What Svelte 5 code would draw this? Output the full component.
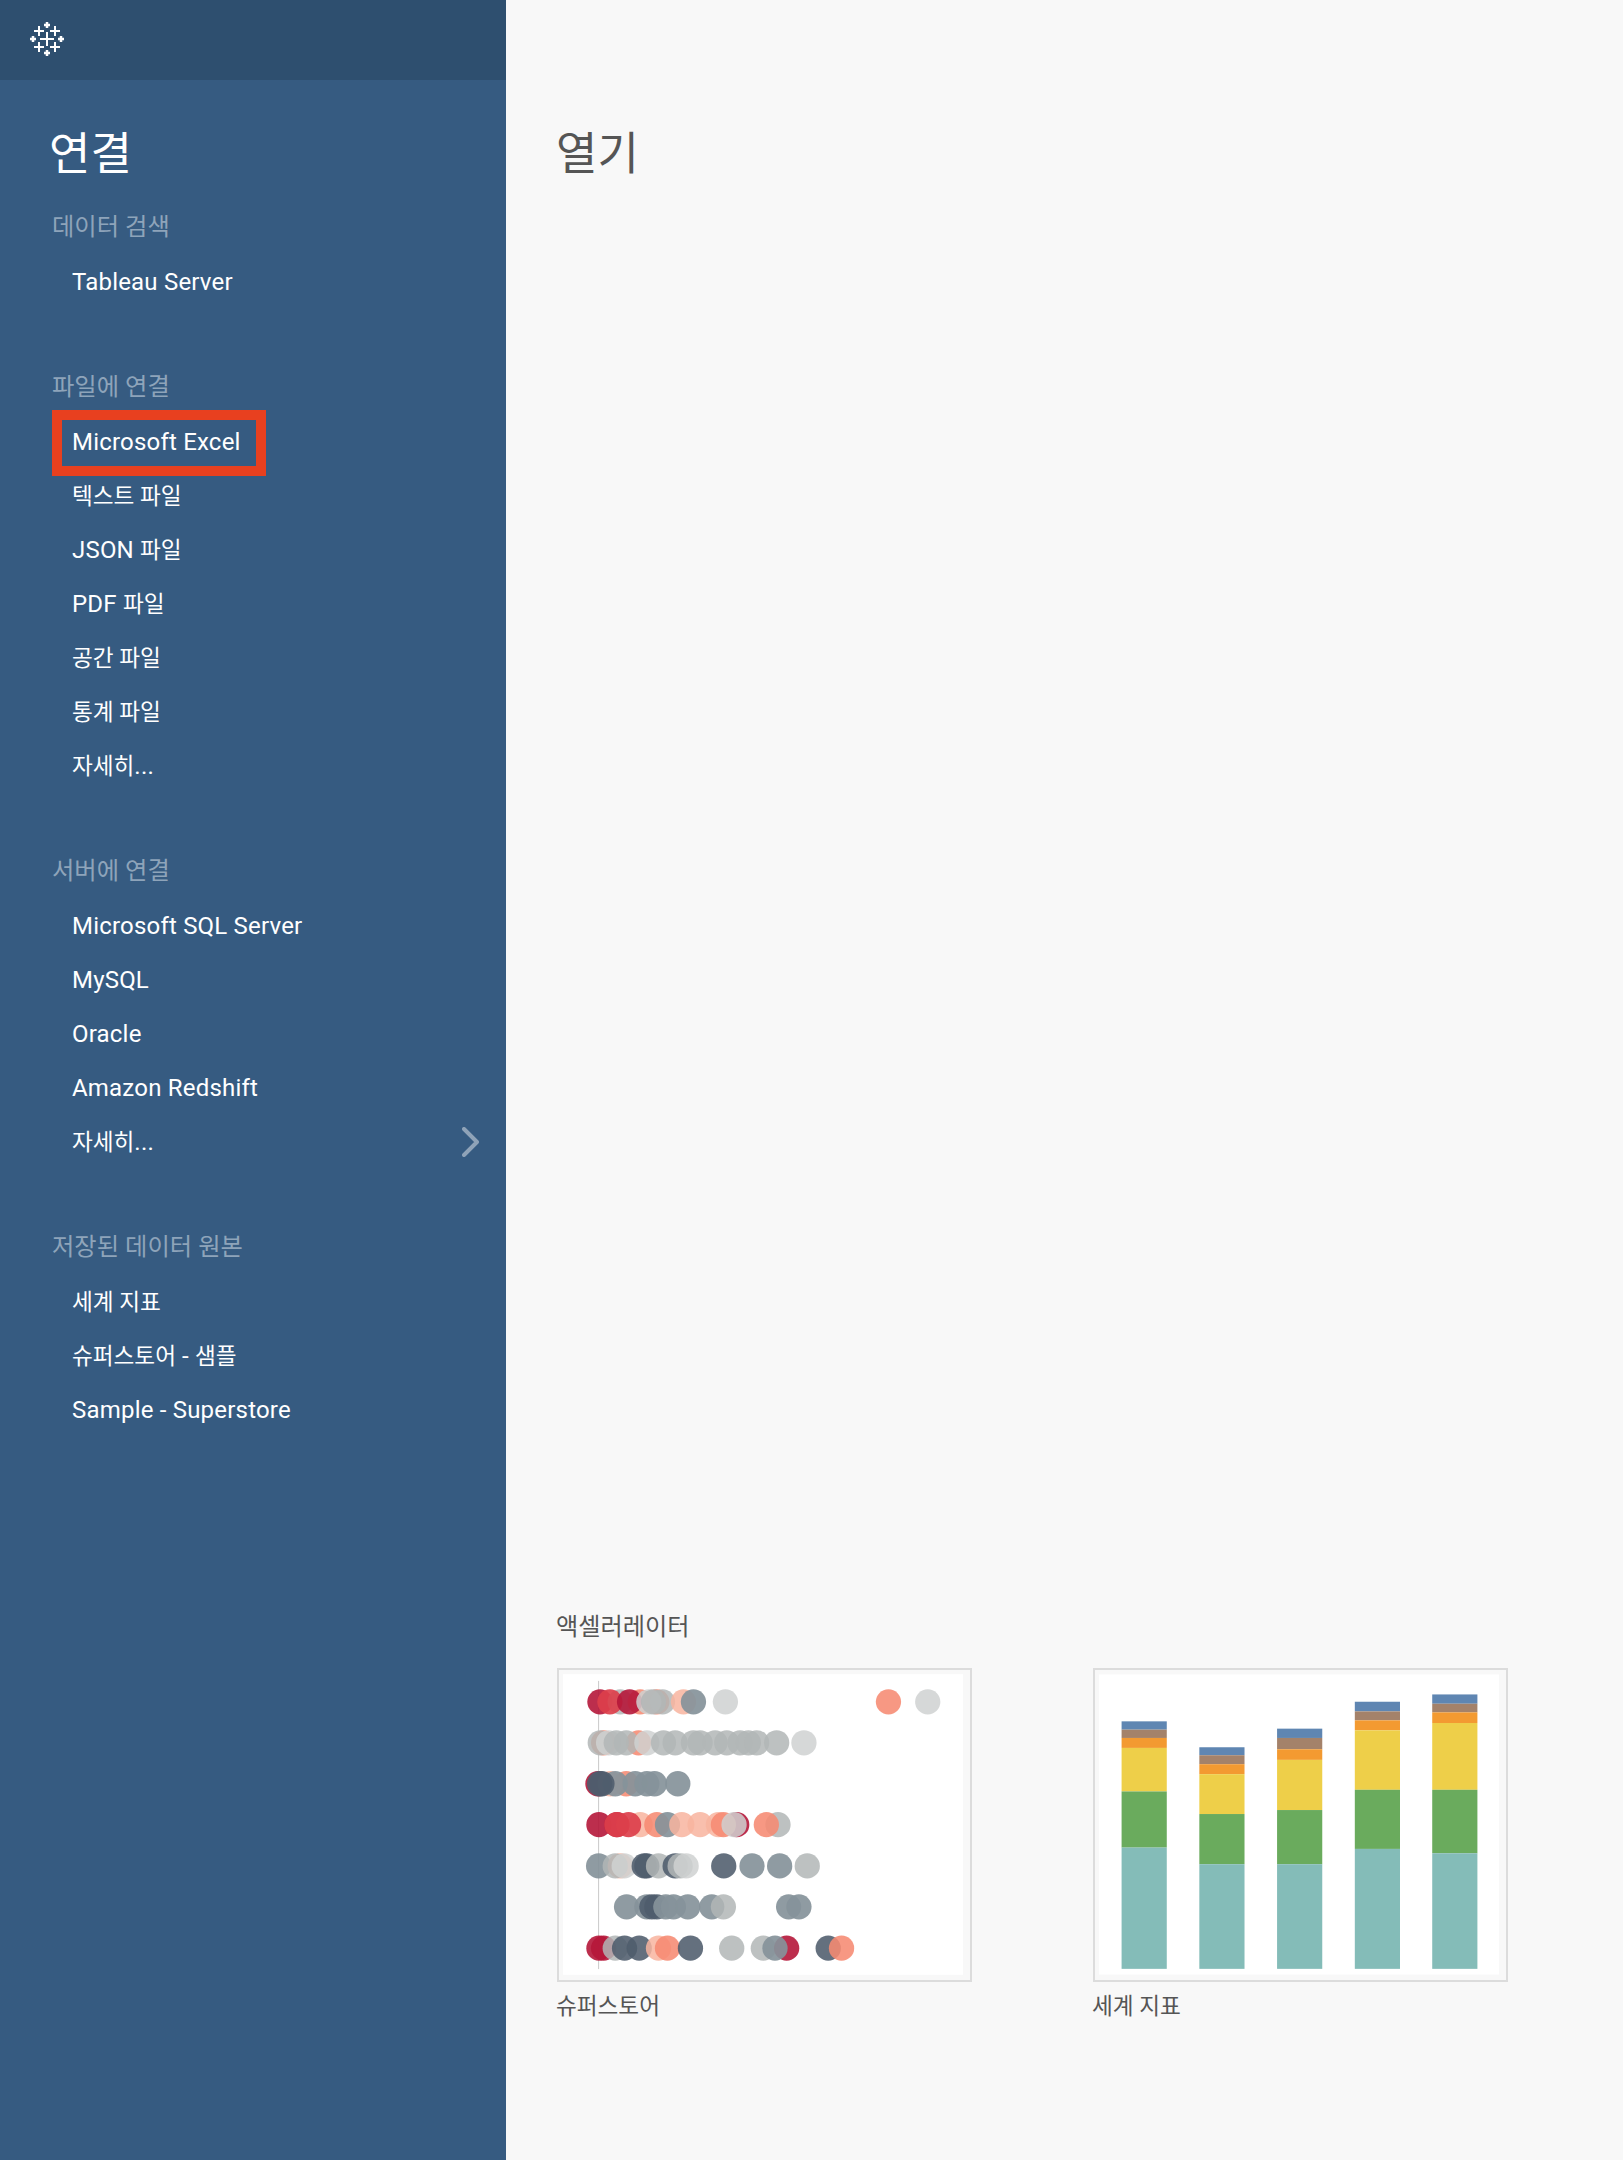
<script>
  const sections = [
    { title: '데이터 검색', items: ['Tableau Server'] },
    { title: '파일에 연결', items: ['Microsoft Excel', '텍스트 파일', 'JSON 파일', 'PDF 파일', '공간 파일', '통계 파일', '자세히...'] },
    { title: '서버에 연결', items: ['Microsoft SQL Server', 'MySQL', 'Oracle', 'Amazon Redshift', '자세히...'], more: true },
    { title: '저장된 데이터 원본', items: ['세계 지표', '슈퍼스토어 - 샘플', 'Sample - Superstore'] }
  ];
  const hangul = /[\uac00-\ud7a3]/;
  const runs = (s) => s.split(/([\uac00-\ud7a3]+(?: [\uac00-\ud7a3]+)*)/).filter(Boolean).map((t) => ({ t, ko: hangul.test(t) }));
  const C = {
    c: ['#b5173a', 0.9], r: ['#dc3f4b', 0.92], s: ['#f68a72', 0.88], l: ['#f8b49f', 0.85],
    g: ['#b1b6b6', 0.85], w: ['#cfd1d1', 0.85], m: ['#86939a', 0.92], d: ['#4f5c6c', 0.88]
  };
  const rows = [
    [335, 'c179 g240 r209 s300 c268 s350 g367 w326 g340 l430 m460 w556 s1046 w1164'],
    [458, 's190 s295 g180 w205 g258 g228 w320 g480 g370 g405 g460 g525 g560 g600 g625 g650 g710 w792'],
    [581, 'c173 s258 l210 m225 d185 d178 m285 m320 m343 m413'],
    [704, 'c176 c230 l300 r230 r265 s350 m382 l425 l480 l535 c590 s550 w582 g714 s679'],
    [828, 'm175 l240 g225 w252 d312 d320 g355 d405 g420 w438 d551 m636 m719 g802'],
    [951, 'm259 m320 d335 d350 m377 m400 m443 m515 g550 m746 m777'],
    [1075, 'c176 c190 g225 d253 d297 l355 s382 d451 g575 g670 c740 m705 d865 s905']
  ];
  const dots = rows.flatMap(([y, s]) => s.split(' ').map((t) => ({ y, x: +t.slice(1), fill: C[t[0]][0], op: C[t[0]][1] })));
  const segColors = ['#5f86b2', '#a4826a', '#f39a31', '#eecf49', '#6aab5d', '#84bcb8'];
  const bars = [
    [154, [243, 268, 293, 323, 454, 623]],
    [388, [321, 345, 372, 402, 522, 673]],
    [622, [265, 293, 327, 359, 510, 673]],
    [856, [184, 213, 240, 270, 449, 627]],
    [1089, [162, 190, 216, 248, 449, 640]]
  ];
  const bottom = 988;
</script>

<div class="page">
  <aside class="side">
    <header class="top">
      <svg class="logo" viewBox="0 0 36 36" width="36" height="36" aria-hidden="true">
        <path d="M18 11v14M11 18h14" stroke-width="2" />
        <path d="M10 5v10M5 10h10M26 5v10M21 10h10M10 21v10M5 26h10M26 21v10M21 26h10" stroke-width="2" />
        <path d="M18 1v6M15 4h6M18 29v6M15 32h6M4 15v6M1 18h6M32 15v6M29 18h6" stroke-width="2.500" />
      </svg>
    </header>
    <h1 class="title light">연결</h1>
    {#each sections as sec}
      <section class="sec">
        <h2 class="head">{sec.title}</h2>
        <ul>
          {#each sec.items as it, i}
            <li class="item">
              <span class:up={hangul.test(it)}>{#each runs(it) as r}{#if r.ko}<span class="ko">{r.t}</span>{:else}{r.t}{/if}{/each}</span>
              {#if it === 'Microsoft Excel'}<i class="mark"></i>{/if}
              {#if sec.more && i === sec.items.length - 1}
                <svg class="chev" viewBox="0 0 17 30" width="17" height="30" aria-hidden="true"><path d="M2 2l13 13L2 28" /></svg>
              {/if}
            </li>
          {/each}
        </ul>
      </section>
    {/each}
  </aside>

  <main class="main">
    <h1 class="title dark">열기</h1>
    <div class="acc">
      <h3 class="label">액셀러레이터</h3>
      <div class="cards">
        <figure class="card">
          <div class="thumb">
            <svg viewBox="68 252 1202 903" class="chart" aria-hidden="true">
              <rect x="68" y="252" width="1202" height="903" fill="#fff" />
              <line x1="175" x2="175" y1="272" y2="1138" stroke="#c9c9c9" stroke-width="3" />
              {#each dots as d}
                <circle cx={d.x} cy={d.y} r="38" fill={d.fill} fill-opacity={d.op} />
              {/each}
            </svg>
          </div>
          <figcaption>슈퍼스토어</figcaption>
        </figure>
        <figure class="card">
          <div class="thumb">
            <svg viewBox="86 102 1204 903" class="chart" aria-hidden="true">
              <rect x="86" y="102" width="1204" height="903" fill="#fff" />
              {#each bars as [x, ys]}
                {#each ys as y, i}
                  <rect x={x} y={y} width="136" height={(ys[i + 1] ?? bottom) - y} fill={segColors[i]} />
                {/each}
              {/each}
            </svg>
          </div>
          <figcaption>세계 지표</figcaption>
        </figure>
      </div>
    </div>
  </main>
</div>

<style>
  :global(body) { margin: 0; }
  .page {
    display: grid;
    grid-template-columns: 506px 1fr;
    height: 2160px;
    font-family: Roboto, "Noto Sans CJK KR", sans-serif;
    font-weight: 400;
    background: #f8f8f8;
  }
  .side { background: #365b81; color: #fff; }
  .top { height: 80px; background: #2e4f6f; display: flex; align-items: flex-start; padding: 21px 0 0 29px; box-sizing: border-box; }
  .logo { display: block; }
  .logo path { stroke: #fff; fill: none; }
  .title { margin: 0; padding-top: 47px; font-size: 45px; line-height: 56px; font-weight: 400; height: 56px; }
  .light { padding-left: 49px; color: #fff; margin-bottom: 15px; }
  .dark { color: #555; padding-top: 127px; }
  .sec { margin-bottom: 49px; }
  .head { margin: 0; padding-left: 52px; height: 57px; line-height: 58px; font-size: 24.3px; font-weight: 400; color: #8ea4ba; }
  ul { list-style: none; margin: 0; padding: 0; }
  .item { position: relative; display: flex; justify-content: space-between; align-items: center; height: 54px; padding: 0 27px 0 72px; font-size: 24px; letter-spacing: 0.2px; color: #fff; }
  .up { margin-bottom: 3px; }
  .ko { font-size: 22.6px; letter-spacing: 0; }
  .mark { position: absolute; left: 52px; top: -5px; width: 214px; height: 66px; box-sizing: border-box; border: 10px solid #e8401f; }
  .chev { display: block; }
  .chev path { fill: none; stroke: #8fa3b8; stroke-width: 4; stroke-linecap: round; stroke-linejoin: round; }
  .main { padding-left: 50px; display: flex; flex-direction: column; }
  .acc { margin-top: auto; padding-bottom: 137px; }
  .label { margin: 0 0 25px; font-size: 24.2px; line-height: 32px; font-weight: 400; color: #555; }
  .cards { display: flex; gap: 121px; margin-left: 1px; }
  .card { margin: 0; width: 415px; }
  .thumb { box-sizing: border-box; width: 415px; height: 314px; border: 2px solid #dcdcdc; padding: 4px 7px 5px 4px; }
  .chart { display: block; width: 100%; height: 100%; }
  figcaption { margin: 9px 0 0 -1px; font-size: 22.6px; line-height: 32px; color: #555; }
</style>
